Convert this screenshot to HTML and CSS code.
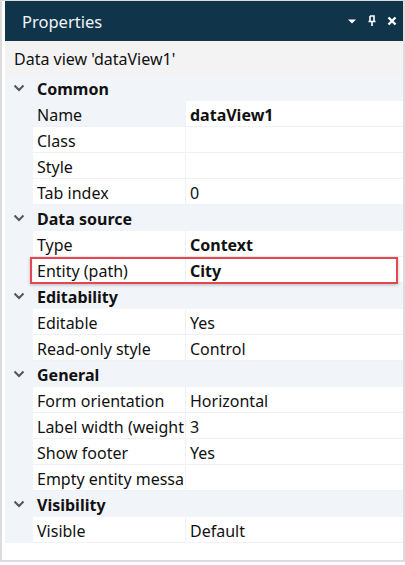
FILE: index.html
```html
<!DOCTYPE html>
<html>
<head>
<meta charset="utf-8">
<link rel="stylesheet" href="styles.css">
</head>
<body>
<div class="window">
  <header class="titlebar">
    <span class="title">Properties</span>
    <div class="tools">
      <svg width="10" height="8" viewBox="0 0 10 8"><path d="M1 2.5 H9 L5 6.5 Z" fill="#fff"/></svg>
      <svg width="10" height="12" viewBox="0 0 10 12"><path d="M3 1 V6 M3 1 H7 V6 M1.5 6.5 H8.5 M5 6.5 V11" stroke="#fff" stroke-width="1.6" fill="none"/></svg>
      <svg width="10" height="10" viewBox="0 0 10 10"><path d="M1.5 1.5 L8.5 8.5 M8.5 1.5 L1.5 8.5" stroke="#fff" stroke-width="2.4"/></svg>
    </div>
  </header>
  <div class="subtitle">Data view 'dataView1'</div>
  <div class="grid">
    <div class="group"><span class="chev"><svg width="12" height="8" viewBox="0 0 12 8"><path d="M1.5 1.5 L6 6 L10.5 1.5" stroke="#555" stroke-width="2" fill="none"/></svg></span><span class="gname">Common</span></div>
    <div class="prop"><span class="indent"></span><span class="label sel">Name</span><span class="value bold">dataView1</span></div>
    <div class="prop"><span class="indent"></span><span class="label">Class</span><span class="value"></span></div>
    <div class="prop"><span class="indent"></span><span class="label">Style</span><span class="value"></span></div>
    <div class="prop"><span class="indent"></span><span class="label">Tab index</span><span class="value">0</span></div>

    <div class="group"><span class="chev"><svg width="12" height="8" viewBox="0 0 12 8"><path d="M1.5 1.5 L6 6 L10.5 1.5" stroke="#555" stroke-width="2" fill="none"/></svg></span><span class="gname">Data source</span></div>
    <div class="prop"><span class="indent"></span><span class="label">Type</span><span class="value bold">Context</span></div>
    <div class="prop highlighted"><span class="indent"></span><span class="label">Entity (path)</span><span class="value bold">City</span><span class="mark"></span></div>

    <div class="group"><span class="chev"><svg width="12" height="8" viewBox="0 0 12 8"><path d="M1.5 1.5 L6 6 L10.5 1.5" stroke="#555" stroke-width="2" fill="none"/></svg></span><span class="gname">Editability</span></div>
    <div class="prop"><span class="indent"></span><span class="label">Editable</span><span class="value">Yes</span></div>
    <div class="prop"><span class="indent"></span><span class="label">Read-only style</span><span class="value">Control</span></div>

    <div class="group"><span class="chev"><svg width="12" height="8" viewBox="0 0 12 8"><path d="M1.5 1.5 L6 6 L10.5 1.5" stroke="#555" stroke-width="2" fill="none"/></svg></span><span class="gname">General</span></div>
    <div class="prop"><span class="indent"></span><span class="label">Form orientation</span><span class="value">Horizontal</span></div>
    <div class="prop"><span class="indent"></span><span class="label">Label width (weight</span><span class="value">3</span></div>
    <div class="prop"><span class="indent"></span><span class="label">Show footer</span><span class="value">Yes</span></div>
    <div class="prop"><span class="indent"></span><span class="label">Empty entity messa</span><span class="value"></span></div>

    <div class="group"><span class="chev"><svg width="12" height="8" viewBox="0 0 12 8"><path d="M1.5 1.5 L6 6 L10.5 1.5" stroke="#555" stroke-width="2" fill="none"/></svg></span><span class="gname">Visibility</span></div>
    <div class="prop"><span class="indent"></span><span class="label">Visible</span><span class="value">Default</span></div>
  </div>
</div>
</body>
</html>
```
FILE: styles.css
```css
* { box-sizing: border-box; }
html, body { margin: 0; padding: 0; background: #fff; }
body {
  font-family: "Noto Sans", "Open Sans", sans-serif;
  color: #111;
  width: 405px;
  height: 565px;
  overflow: hidden;
}
.window {
  height: 562px;
  border-top: 1px solid #dcdcdc;
  border-left: 2px solid #dcdcdc;
  border-right: 2px solid #dcdcdc;
  border-bottom: 2px solid #dcdcdc;
  padding-left: 3px;
  display: flex;
  flex-direction: column;
}
.titlebar {
  height: 40px;
  background: #10344a;
  display: flex;
  align-items: center;
  justify-content: space-between;
  padding: 0 6px 0 17px;
  flex: none;
}
.title {
  color: #f0f4f7;
  font-size: 16.5px;
}
.tools {
  display: flex;
  align-items: center;
  gap: 10px;
}
.tools svg { display: block; }
.subtitle {
  height: 34px;
  background: #f3f3f3;
  display: flex;
  align-items: center;
  padding-left: 9px;
  padding-top: 2px;
  font-size: 16px;
  flex: none;
}
.grid {
  display: flex;
  flex-direction: column;
}
.group {
  height: 26px;
  background: #f1f4f9;
  display: flex;
  align-items: center;
}
.chev {
  width: 32px;
  display: flex;
  justify-content: center;
  padding-right: 4px;
}
.chev svg { display: block; }
.gname {
  font-weight: 700;
  font-size: 16px;
  padding-top: 2px;
}
.prop {
  height: 26px;
  display: grid;
  grid-template-columns: 28px 153px 1fr;
  position: relative;
  font-size: 16px;
}
.indent { background: #f1f4f9; }
.label, .value {
  display: flex;
  align-items: center;
  white-space: nowrap;
  overflow: hidden;
  border-bottom: 1px solid #eef2f7;
  background: #fff;
  padding-left: 4px;
  padding-top: 2px;
}
.label { border-right: 1px solid #eef2f7; }
.label.sel { background: #f1f4f9; }
.bold { font-weight: 700; }
.mark {
  position: absolute;
  left: 25px;
  right: 5px;
  top: 0;
  bottom: -1px;
  border: 2px solid #e5474c;
  box-shadow: 0 1px 3px rgba(0,0,0,0.25);
  pointer-events: none;
}
```
